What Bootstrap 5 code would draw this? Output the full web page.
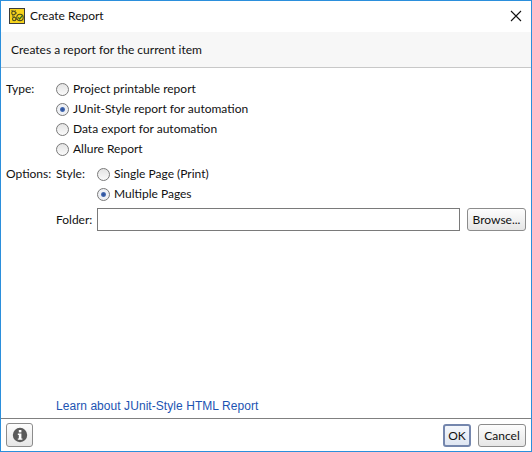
<!DOCTYPE html>
<html lang="en">
<head>
<meta charset="utf-8">
<title>Create Report</title>
<link rel="stylesheet" href="https://cdn.jsdelivr.net/npm/bootstrap@5.3.0/dist/css/bootstrap.min.css">
<style>
html,body{height:100%}
body{margin:0;background:#fff;color:#111;font:12px/16px Lato,"Noto Sans",sans-serif}
.dlg{height:452px;width:532px;border:1px solid #2b8fdc;display:flex;flex-direction:column;overflow:hidden}
.dlg-title{height:31px;padding:0 8px 2px 8px;gap:5px;flex:none}
.dlg-close{width:14px;height:14px;display:block}
.dlg-desc{height:36px;flex:none;background:#f7f7f7;border-bottom:1px solid #c8c8c8;padding:0 10px;line-height:35px}
.dlg-body{flex:1 1 auto;padding:13px 5px 0 5px;min-height:0}
.lbl-main{width:50px;flex:none}
.lbl-sub{width:41px;flex:none}
.rad-row{height:20px}
.rad-item{margin:0;min-height:0;padding:0;display:flex;align-items:center;gap:4px;line-height:16px}
.rad-item .form-check-input{width:13px;height:13px;margin:0;float:none;flex:none;border:1px solid #7a7a7a;background-image:linear-gradient(#e4e4e4,#fafafa)}
.rad-item .form-check-input:checked{background-color:#f2f2f2;border-color:#7a7a7a;background-image:radial-gradient(circle at 50% 50%,#2f4f96 0,#3a62ad 1.9px,#eef0f4 3px)}
.rad-item .form-check-label{color:#111}
.opt-block{margin-top:5px}
.folder-row{height:23px;margin-top:2px;gap:7px}
.folder-lbl{width:34px;flex:none}
.folder-in{height:23px;width:363px;flex:none;border:1px solid #7a7a7a;border-radius:0;padding:0 3px;font-size:12px;box-shadow:none}
.win-btn{height:23px;padding:0;font-size:12px;line-height:20px;color:#111;border:1px solid #8c8c8c;border-radius:3px;background:linear-gradient(#fdfdfd,#e6e6e6);--bs-btn-hover-color:#111}
.browse{width:59px}
.dlg-link{flex:none;height:24px;padding:0 0 0 55px;font:12px/24px "Liberation Sans",Arial,sans-serif;letter-spacing:.06px;color:#1c54b2;text-decoration:none}
.dlg-foot{height:33px;flex:none;border-top:1px solid #808080;padding:4px 5px 3px 5px}
.info-btn{width:27px;height:24px;display:flex;align-items:center;justify-content:center}
.ok-btn{width:28px;border:2px solid #7486ad;border-radius:3px;line-height:19px;margin-top:1px;background:linear-gradient(#f4f7fc,#dfe6f2)}
.cancel-btn{width:48px;margin-top:1px}
.foot-right{gap:7px}
</style>
</head>
<body>
<div class="dlg">
  <div class="dlg-title d-flex align-items-center">
    <svg width="16" height="16" viewBox="0 0 16 16" aria-hidden="true">
      <rect x=".5" y=".5" width="15" height="15" fill="#f6d31c" stroke="#3b3b3b"/>
      <g fill="none" stroke="#4a4a20" stroke-width="1.1">
        <circle cx="4.6" cy="5" r="1.9"/>
        <circle cx="5.2" cy="11" r="1.7"/>
        <circle cx="11" cy="9.4" r="3.2"/>
      </g>
      <path d="M3 2v1M6.5 2.5l-.6.8M8 5H7M3 8h1M5 7.8v1.2M8 11H7" stroke="#4a4a20" fill="none"/>
      <path d="M9.2 9.4l1.4 1.5 3-3.6" fill="none" stroke="#2f6b1f" stroke-width="1.3"/>
    </svg>
    <span class="flex-grow-1">Create Report</span>
    <svg class="dlg-close" viewBox="0 0 14 14" aria-hidden="true"><path d="M2 2l10 10M12 2L2 12" stroke="#111" stroke-width="1.1" fill="none"/></svg>
  </div>
  <div class="dlg-desc">Creates a report for the current item</div>
  <div class="dlg-body">
    <div class="d-flex">
      <div class="lbl-main">Type:</div>
      <div>
        <div class="rad-row"><div class="form-check rad-item"><input class="form-check-input" type="radio" name="t" id="t1"><label class="form-check-label" for="t1">Project printable report</label></div></div>
        <div class="rad-row"><div class="form-check rad-item"><input class="form-check-input" type="radio" name="t" id="t2" checked><label class="form-check-label" for="t2">JUnit-Style report for automation</label></div></div>
        <div class="rad-row"><div class="form-check rad-item"><input class="form-check-input" type="radio" name="t" id="t3"><label class="form-check-label" for="t3">Data export for automation</label></div></div>
        <div class="rad-row"><div class="form-check rad-item"><input class="form-check-input" type="radio" name="t" id="t4"><label class="form-check-label" for="t4">Allure Report</label></div></div>
      </div>
    </div>
    <div class="d-flex opt-block">
      <div class="lbl-main">Options:</div>
      <div class="flex-grow-1">
        <div class="d-flex">
          <div class="lbl-sub">Style:</div>
          <div>
            <div class="rad-row"><div class="form-check rad-item"><input class="form-check-input" type="radio" name="s" id="s1"><label class="form-check-label" for="s1">Single Page (Print)</label></div></div>
            <div class="rad-row"><div class="form-check rad-item"><input class="form-check-input" type="radio" name="s" id="s2" checked><label class="form-check-label" for="s2">Multiple Pages</label></div></div>
          </div>
        </div>
        <div class="d-flex align-items-center folder-row">
          <div class="folder-lbl">Folder:</div>
          <input class="form-control folder-in" type="text" aria-label="Folder">
          <button type="button" class="btn win-btn browse">Browse...</button>
        </div>
      </div>
    </div>
  </div>
  <a class="dlg-link" href="#">Learn about JUnit-Style HTML Report</a>
  <div class="dlg-foot d-flex align-items-start">
    <button type="button" class="btn win-btn info-btn" aria-label="Info">
      <svg width="16" height="16" viewBox="0 0 16 16" aria-hidden="true">
        <circle cx="8" cy="8" r="7.2" fill="#5a5a5a"/>
        <rect x="6.8" y="3" width="2.6" height="2.4" fill="#fff"/>
        <path d="M5.8 6.6h3.6v4.8h1v1.4H5.8v-1.4h1V8H5.8z" fill="#fff"/>
      </svg>
    </button>
    <div class="ms-auto d-flex foot-right">
      <button type="button" class="btn win-btn ok-btn">OK</button>
      <button type="button" class="btn win-btn cancel-btn">Cancel</button>
    </div>
  </div>
</div>
</body>
</html>
